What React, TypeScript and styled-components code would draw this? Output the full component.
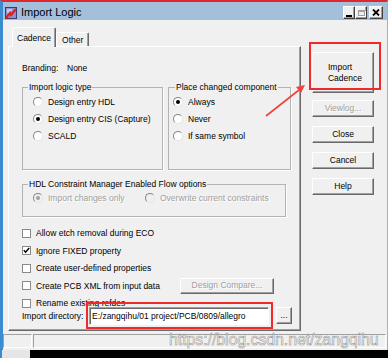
import styled, { createGlobalStyle } from "styled-components";

const GlobalStyle = createGlobalStyle`
  html, body { margin: 0; padding: 0; background: #000; }
  body {
    font-family: "Liberation Sans", Arial, sans-serif;
    font-size: 8.5px;
    color: #000;
  }
`;

const Screen = styled.div`
  position: relative;
  width: 388px;
  height: 358px;
  overflow: hidden;
  background: #000;
  display: flex;
  flex-direction: column;
`;

const Window = styled.div`
  width: 388px;
  height: 350px;
  flex: none;
  box-sizing: border-box;
  border-top: 2px solid #e0282c;
  border-left: 3px solid #3b8bd0;
  border-right: 1px solid #9fb3c6;
  background: #f0f0f0;
  display: flex;
  flex-direction: column;
`;

const TitleBar = styled.div`
  height: 18px;
  flex: none;
  box-sizing: border-box;
  padding: 3px 4px 0 2px;
  background: #a4bfd9;
  display: flex;
  align-items: center;
`;

const TitleText = styled.span`
  margin-left: 4px;
  font-size: 11px;
  line-height: 13px;
`;

const CaptionGroup = styled.div`
  margin-left: auto;
  display: flex;
  align-items: center;
`;

const CaptionButton = styled.div<{ $w: number; $gap?: number }>`
  width: ${(p) => p.$w}px;
  height: 13px;
  margin-left: ${(p) => p.$gap ?? 0}px;
  box-sizing: border-box;
  background: #f0f0f0;
  border: 1px solid;
  border-color: #fff #404040 #404040 #fff;
  box-shadow: inset -1px -1px 0 #a0a0a0;
  display: flex;
  align-items: center;
  justify-content: center;
`;

const MinGlyph = styled.span`
  width: 6px;
  height: 2px;
  margin-top: 6px;
  margin-right: 1px;
  background: #000;
`;

const MaxGlyph = styled.span`
  width: 7px;
  height: 6px;
  box-sizing: border-box;
  border: 1px solid #a0a0a0;
  border-top-width: 2px;
  box-shadow: 1px 1px 0 #fff;
`;

const Body = styled.div`
  flex: 1;
  min-height: 0;
  display: flex;
  padding: 7px 0 0 5px;
`;

const LeftCol = styled.div`
  width: 293px;
  display: flex;
  flex-direction: column;
`;

const TabStrip = styled.div`
  height: 19px;
  display: flex;
  align-items: flex-end;
  padding-left: 4px;
`;

const Tab = styled.div<{ $active?: boolean }>`
  position: relative;
  z-index: ${(p) => (p.$active ? 2 : 1)};
  height: ${(p) => (p.$active ? 20 : 14)}px;
  margin-bottom: ${(p) => (p.$active ? -1 : 0)}px;
  box-sizing: border-box;
  padding: 0 ${(p) => (p.$active ? 4 : 5)}px;
  border: 1px solid;
  border-bottom: none;
  border-color: #fff #696969 transparent #fff;
  border-radius: 2px 2px 0 0;
  box-shadow: inset -1px 0 0 #a0a0a0;
  background: #f0f0f0;
  display: flex;
  align-items: center;
  line-height: 10px;
`;

const Panel = styled.div`
  position: relative;
  z-index: 1;
  height: 285px;
  box-sizing: border-box;
  border: 1px solid;
  border-color: #fff #696969 #696969 #fff;
  box-shadow: inset -1px -1px 0 #a0a0a0;
  padding-left: 13px;
  display: flex;
  flex-direction: column;
`;

const InfoRow = styled.div`
  margin-top: 16px;
  height: 10px;
  line-height: 10px;
  display: flex;
`;

const InfoLabel = styled.span`
  width: 45px;
`;

const GroupsRow = styled.div`
  margin-top: 9px;
  display: flex;
  gap: 5px;
`;

const Group = styled.fieldset<{ $w: number; $h: number; $mt?: number }>`
  margin: ${(p) => p.$mt ?? 0}px 0 0 0;
  padding: 0;
  min-width: 0;
  width: ${(p) => p.$w}px;
  height: ${(p) => p.$h}px;
  box-sizing: border-box;
  border: 1px solid #b3b3b3;
  box-shadow: 1px 1px 0 #fff;
`;

const Legend = styled.legend<{ $offset: number; $dim?: boolean }>`
  margin-left: ${(p) => p.$offset}px;
  padding: 0 1px;
  line-height: 10px;
  color: #000;
`;

const OptionList = styled.div<{ $inset: number; $row?: boolean }>`
  padding: ${(p) => (p.$row ? 0 : 1)}px 0 0 ${(p) => p.$inset}px;
  display: flex;
  flex-direction: ${(p) => (p.$row ? "row" : "column")};
`;

const OptionRow = styled.div<{ $w?: number; $dim?: boolean }>`
  height: 17px;
  width: ${(p) => (p.$w ? `${p.$w}px` : "auto")};
  display: flex;
  align-items: center;
  color: ${(p) => (p.$dim ? "#a0a0a0" : "#000")};
  text-shadow: ${(p) => (p.$dim ? "1px 1px 0 #fff" : "none")};
`;

const Radio = styled.span<{ $checked?: boolean; $dim?: boolean }>`
  flex: none;
  width: 10px;
  height: 10px;
  margin-right: 5px;
  box-sizing: border-box;
  border-radius: 50%;
  border: 1px solid;
  border-color: #858585 #e4e4e4 #e4e4e4 #858585;
  background: ${(p) => (p.$dim ? "#f0f0f0" : "#fff")};
  display: flex;
  align-items: center;
  justify-content: center;

  &::after {
    content: "";
    display: ${(p) => (p.$checked ? "block" : "none")};
    width: 4px;
    height: 4px;
    border-radius: 50%;
    background: ${(p) => (p.$dim ? "#a0a0a0" : "#000")};
  }
`;

const CheckList = styled.div`
  margin-top: 11px;
  display: flex;
  flex-direction: column;
  gap: 7.5px;
`;

const CheckRow = styled.div`
  height: 10px;
  display: flex;
  align-items: center;
`;

const CheckItem = styled.div<{ $w?: number }>`
  width: ${(p) => (p.$w ? `${p.$w}px` : "auto")};
  display: flex;
  align-items: center;
  line-height: 10px;
`;

const CheckBox = styled.span`
  flex: none;
  width: 9px;
  height: 9px;
  margin-right: 5px;
  box-sizing: border-box;
  border: 1px solid #8a8a8a;
  background: #fff;
  display: flex;
  align-items: center;
  justify-content: center;
`;

const Button = styled.div<{ $w?: number; $h?: number; $mt?: number; $dim?: boolean }>`
  flex: none;
  width: ${(p) => p.$w ?? 62}px;
  height: ${(p) => p.$h ?? 17}px;
  margin-top: ${(p) => p.$mt ?? 0}px;
  box-sizing: border-box;
  background: #f0f0f0;
  border: 1px solid;
  border-color: #fff #696969 #696969 #fff;
  box-shadow: inset -1px -1px 0 #a0a0a0;
  display: flex;
  align-items: center;
  justify-content: center;
  line-height: 11px;
  color: ${(p) => (p.$dim ? "#a0a0a0" : "#000")};
  text-shadow: ${(p) => (p.$dim ? "1px 1px 0 #fff" : "none")};
`;

const TwoLine = styled.span`
  display: inline-block;
  text-align: left;
  margin-left: 4px;
`;

const DirRow = styled.div`
  margin-top: -2px;
  height: 19px;
  display: flex;
  align-items: center;
`;

const DirLabel = styled.span`
  width: 67px;
`;

const PathInput = styled.div`
  width: 180px;
  height: 18px;
  box-sizing: border-box;
  padding-left: 2px;
  border: 1px solid;
  border-color: #a0a0a0 #fff #fff #a0a0a0;
  box-shadow: inset 1px 1px 0 #696969;
  background: #fff;
  display: flex;
  align-items: center;
  margin-right: 7px;
`;

const SideCol = styled.div`
  margin-left: 11px;
  padding-top: 25px;
  width: 62px;
  display: flex;
  flex-direction: column;
`;

const StatusBar = styled.div`
  height: 14px;
  margin-bottom: 2px;
  flex: none;
  display: flex;
`;

const StatusPane = styled.div<{ $w?: number }>`
  flex: ${(p) => (p.$w ? `0 0 ${p.$w}px` : "1")};
  margin-right: 1px;
  box-sizing: border-box;
  border: 1px solid;
  border-color: #a0a0a0 #fff #fff #a0a0a0;
`;

const Desktop = styled.div`
  flex: 1;
  display: flex;
`;

const DesktopGap = styled.div`
  width: 30px;
  background: #e4e6e8;
  border-left: 2px solid #3b8bd0;
  box-sizing: border-box;
`;

const Annotations = styled.svg`
  position: absolute;
  left: 0;
  top: 0;
  pointer-events: none;
  z-index: 5;
`;

const Watermark = styled.div`
  position: absolute;
  left: 169px;
  top: 332px;
  z-index: 6;
  font-family: "Liberation Sans", Arial, sans-serif;
  font-size: 16px;
  line-height: 16px;
  letter-spacing: -0.1px;
  color: rgba(255, 255, 255, 0.72);
  -webkit-text-stroke: 0.6px rgba(120, 120, 120, 0.75);
  pointer-events: none;
`;

const AppIcon = () => (
  <svg width="12" height="12" viewBox="0 0 12 12">
    <rect x="0.5" y="0.5" width="11" height="11" fill="#8c90d0" stroke="#3a3a7a" />
    <path d="M2 3h5M2 5h3" stroke="#fff" strokeWidth="1" />
    <path d="M1 11 L5 6 L6 8 L11 2" fill="none" stroke="#e41c1c" strokeWidth="2.2" />
  </svg>
);

const CloseGlyph = () => (
  <svg width="8" height="7" viewBox="0 0 8 7">
    <path d="M1 0.5 L7 6.5 M7 0.5 L1 6.5" stroke="#000" strokeWidth="1.8" />
  </svg>
);

const Tick = () => (
  <svg width="7" height="7" viewBox="0 0 7 7">
    <path d="M0.8 3.3 L2.6 5.2 L6.2 1" fill="none" stroke="#000" strokeWidth="1.4" />
  </svg>
);

type Option = { label: string; checked?: boolean; w?: number };

const logicTypes: Option[] = [
  { label: "Design entry HDL" },
  { label: "Design entry CIS (Capture)", checked: true },
  { label: "SCALD" },
];

const placeModes: Option[] = [
  { label: "Always", checked: true },
  { label: "Never" },
  { label: "If same symbol" },
];

const hdlModes: Option[] = [
  { label: "Import changes only", checked: true, w: 112 },
  { label: "Overwrite current constraints" },
];

const checks = [
  { label: "Allow etch removal during ECO", checked: false },
  { label: "Ignore FIXED property", checked: true },
  { label: "Create user-defined properties", checked: false },
  { label: "Create PCB XML from input data", checked: false, button: "Design Compare..." },
  { label: "Rename existing refdes", checked: false },
];

const App = () => {
  return (
    <Screen>
      <GlobalStyle />
      <Window>
        <TitleBar>
          <AppIcon />
          <TitleText>Import Logic</TitleText>
          <CaptionGroup>
            <CaptionButton $w={12}>
              <MinGlyph />
            </CaptionButton>
            <CaptionButton $w={12}>
              <MaxGlyph />
            </CaptionButton>
            <CaptionButton $w={14} $gap={2}>
              <CloseGlyph />
            </CaptionButton>
          </CaptionGroup>
        </TitleBar>

        <Body>
          <LeftCol>
            <TabStrip>
              <Tab $active>Cadence</Tab>
              <Tab>Other</Tab>
            </TabStrip>
            <Panel>
              <InfoRow>
                <InfoLabel>Branding:</InfoLabel>
                <span>None</span>
              </InfoRow>

              <GroupsRow>
                <Group $w={141} $h={88}>
                  <Legend $offset={5}>Import logic type</Legend>
                  <OptionList $inset={10}>
                    {logicTypes.map((o) => (
                      <OptionRow key={o.label}>
                        <Radio $checked={o.checked} />
                        {o.label}
                      </OptionRow>
                    ))}
                  </OptionList>
                </Group>
                <Group $w={123} $h={88}>
                  <Legend $offset={6}>Place changed component</Legend>
                  <OptionList $inset={4}>
                    {placeModes.map((o) => (
                      <OptionRow key={o.label}>
                        <Radio $checked={o.checked} />
                        {o.label}
                      </OptionRow>
                    ))}
                  </OptionList>
                </Group>
              </GroupsRow>

              <Group $w={264} $h={38} $mt={9}>
                <Legend $offset={5}>HDL Constraint Manager Enabled Flow options</Legend>
                <OptionList $inset={10} $row>
                  {hdlModes.map((o) => (
                    <OptionRow key={o.label} $w={o.w} $dim>
                      <Radio $checked={o.checked} $dim />
                      {o.label}
                    </OptionRow>
                  ))}
                </OptionList>
              </Group>

              <CheckList>
                {checks.map((c) => (
                  <CheckRow key={c.label}>
                    <CheckItem $w={c.button ? 158 : undefined}>
                      <CheckBox>{c.checked && <Tick />}</CheckBox>
                      {c.label}
                    </CheckItem>
                    {c.button && (
                      <Button $w={94} $h={16} $dim>
                        {c.button}
                      </Button>
                    )}
                  </CheckRow>
                ))}
              </CheckList>

              <DirRow>
                <DirLabel>Import directory:</DirLabel>
                <PathInput>E:/zangqihu/01 project/PCB/0809/allegro</PathInput>
                <Button $w={16} $h={17}>...</Button>
              </DirRow>
            </Panel>
          </LeftCol>

          <SideCol>
            <Button $h={41}>
              <TwoLine>
                Import
                <br />
                Cadence
              </TwoLine>
            </Button>
            <Button $mt={7} $dim>Viewlog...</Button>
            <Button $mt={9}>Close</Button>
            <Button $mt={9}>Cancel</Button>
            <Button $mt={9}>Help</Button>
          </SideCol>
        </Body>

        <StatusBar>
          <StatusPane $w={29} />
          <StatusPane />
        </StatusBar>
      </Window>
      <Desktop>
        <DesktopGap />
      </Desktop>

      <Annotations width="388" height="358" viewBox="0 0 388 358">
        <rect x="310" y="43" width="70" height="46" fill="none" stroke="#ee2a2a" strokeWidth="2" />
        <rect x="87" y="303" width="185" height="25" fill="none" stroke="#ee2a2a" strokeWidth="2" />
        <line x1="266" y1="116" x2="299" y2="90" stroke="#f04040" strokeWidth="1.6" />
        <polygon points="305,85 296,87 301,93" fill="#f04040" />
      </Annotations>
      <Watermark>https://blog.csdn.net/zangqihu</Watermark>
    </Screen>
  );
};

export default App;
